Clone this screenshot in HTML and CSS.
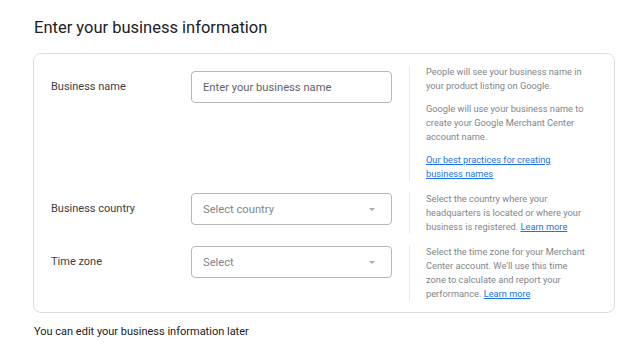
FILE: index.html
```html
<!DOCTYPE html>
<html>
	<head>
		<meta charset="UTF-8">
		<title>Business information</title>
		<link rel="stylesheet" href="styles.css">
	</head>
	<body>
		<div class="page">
			<h1 class="title">Enter your business information</h1>
			<div class="card">
				<div class="row row-name">
					<div class="label">Business name</div>
					<div class="field">
						<input class="input" type="text" placeholder="Enter your business name">
					</div>
					<div class="help">
						<p>People will see your business name in your product listing on Google.</p>
						<p>Google will use your business name to create your Google Merchant Center account name.</p>
						<p><a href="#">Our best practices for creating business names</a></p>
					</div>
				</div>
				<div class="row row-country">
					<div class="label">Business country</div>
					<div class="field">
						<div class="select"><span>Select country</span><i class="caret"></i></div>
					</div>
					<div class="help">
						<p>Select the country where your headquarters is located or where your business is registered. <a href="#">Learn more</a></p>
					</div>
				</div>
				<div class="row row-zone">
					<div class="label">Time zone</div>
					<div class="field">
						<div class="select"><span>Select</span><i class="caret"></i></div>
					</div>
					<div class="help">
						<p>Select the time zone for your Merchant Center account. We'll use this time zone to calculate and report your performance. <a href="#">Learn more</a></p>
					</div>
				</div>
			</div>
			<p class="note">You can edit your business information later</p>
		</div>
	</body>
</html>
```

FILE: styles.css
```css
* {
	margin: 0;
	padding: 0;
	box-sizing: border-box;
}

body {
	font-family: Roboto, "Liberation Sans", Arial, sans-serif;
	color: #202124;
	background: #fff;
}

.page {
	width: 582px;
	margin-left: 33px;
}

.title {
	font-size: 16.5px;
	font-weight: 400;
	line-height: 22px;
	padding: 17px 0 0 1px;
	height: 53px;
	color: #202124;
}

.card {
	border: 1px solid #dadce0;
	border-radius: 8px;
	padding: 11px 15px 11px 17px;
	display: flex;
	flex-direction: column;
	gap: 11px;
}

.row {
	display: grid;
	grid-template-columns: 140px 201px 1fr;
	align-items: start;
}

.label,
.field {
	margin-top: 1px;
}

.row-name .label,
.row-name .field {
	margin-top: 6px;
}

.label {
	font-size: 11px;
	line-height: 32px;
	color: #3c4043;
}

.input,
.select {
	width: 201px;
	height: 32px;
	border: 1px solid #b4b8bc;
	border-radius: 4px;
	padding: 0 11px;
	font-family: inherit;
	font-size: 11.2px;
	color: #202124;
	background: #fff;
	outline: none;
}

.input::placeholder {
	color: #5f6368;
}

.select {
	display: flex;
	align-items: center;
	justify-content: space-between;
	color: #80868b;
}

.caret {
	width: 0;
	height: 0;
	border-left: 3.5px solid transparent;
	border-right: 3.5px solid transparent;
	border-top: 3.5px solid #a8acb0;
	margin-right: 5px;
}

.help {
	margin-left: 17px;
	border-left: 1px solid #e8eaed;
	padding-left: 16px;
	font-size: 9.25px;
	line-height: 14px;
	color: #80868b;
}

.help p {
	max-width: 160px;
}

.help p + p {
	margin-top: 9px;
}

.help a {
	color: #1a73e8;
	text-decoration: underline;
}

.note {
	font-size: 11px;
	line-height: 16px;
	padding: 11px 0 0 1px;
	color: #202124;
}
```
